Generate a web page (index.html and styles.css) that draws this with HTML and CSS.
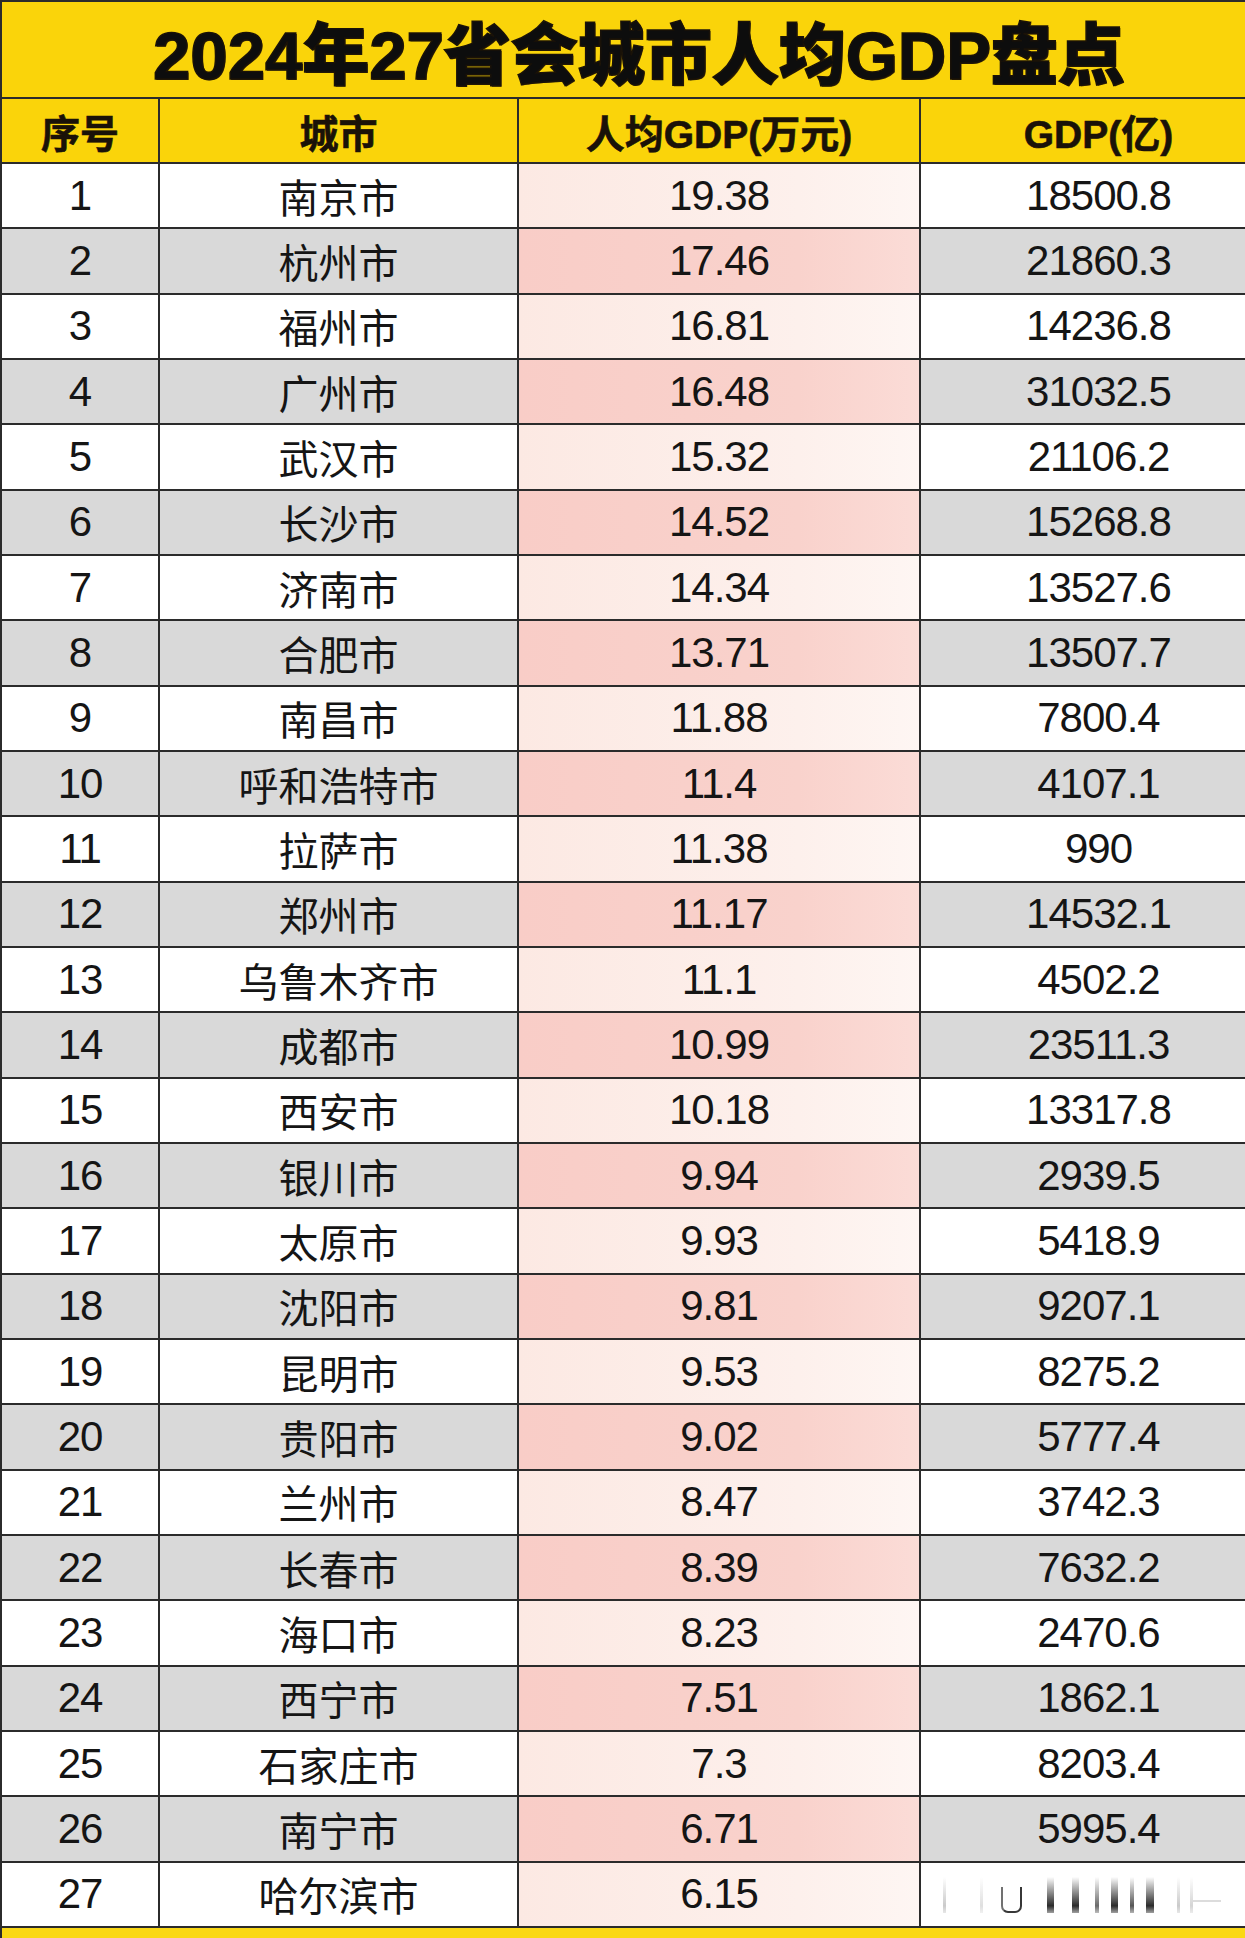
FILE: index.html
```html
<!DOCTYPE html>
<html lang="zh-CN">
<head>
<meta charset="utf-8">
<title>2024年27省会城市人均GDP盘点</title>
<link rel="stylesheet" href="styles.css">
</head>
<body>
<div class="sheet">
  <div class="title">2024年27省会城市人均GDP盘点</div>
  <div class="hd">序号</div>
  <div class="hd">城市</div>
  <div class="hd">人均GDP(万元)</div>
  <div class="hd last">GDP(亿)</div>

  <div class="c n">1</div><div class="c">南京市</div><div class="c p">19.38</div><div class="c n last">18500.8</div>
  <div class="c n g">2</div><div class="c g">杭州市</div><div class="c p g">17.46</div><div class="c n g last">21860.3</div>
  <div class="c n">3</div><div class="c">福州市</div><div class="c p">16.81</div><div class="c n last">14236.8</div>
  <div class="c n g">4</div><div class="c g">广州市</div><div class="c p g">16.48</div><div class="c n g last">31032.5</div>
  <div class="c n">5</div><div class="c">武汉市</div><div class="c p">15.32</div><div class="c n last">21106.2</div>
  <div class="c n g">6</div><div class="c g">长沙市</div><div class="c p g">14.52</div><div class="c n g last">15268.8</div>
  <div class="c n">7</div><div class="c">济南市</div><div class="c p">14.34</div><div class="c n last">13527.6</div>
  <div class="c n g">8</div><div class="c g">合肥市</div><div class="c p g">13.71</div><div class="c n g last">13507.7</div>
  <div class="c n">9</div><div class="c">南昌市</div><div class="c p">11.88</div><div class="c n last">7800.4</div>
  <div class="c n g">10</div><div class="c g">呼和浩特市</div><div class="c p g">11.4</div><div class="c n g last">4107.1</div>
  <div class="c n">11</div><div class="c">拉萨市</div><div class="c p">11.38</div><div class="c n last">990</div>
  <div class="c n g">12</div><div class="c g">郑州市</div><div class="c p g">11.17</div><div class="c n g last">14532.1</div>
  <div class="c n">13</div><div class="c">乌鲁木齐市</div><div class="c p">11.1</div><div class="c n last">4502.2</div>
  <div class="c n g">14</div><div class="c g">成都市</div><div class="c p g">10.99</div><div class="c n g last">23511.3</div>
  <div class="c n">15</div><div class="c">西安市</div><div class="c p">10.18</div><div class="c n last">13317.8</div>
  <div class="c n g">16</div><div class="c g">银川市</div><div class="c p g">9.94</div><div class="c n g last">2939.5</div>
  <div class="c n">17</div><div class="c">太原市</div><div class="c p">9.93</div><div class="c n last">5418.9</div>
  <div class="c n g">18</div><div class="c g">沈阳市</div><div class="c p g">9.81</div><div class="c n g last">9207.1</div>
  <div class="c n">19</div><div class="c">昆明市</div><div class="c p">9.53</div><div class="c n last">8275.2</div>
  <div class="c n g">20</div><div class="c g">贵阳市</div><div class="c p g">9.02</div><div class="c n g last">5777.4</div>
  <div class="c n">21</div><div class="c">兰州市</div><div class="c p">8.47</div><div class="c n last">3742.3</div>
  <div class="c n g">22</div><div class="c g">长春市</div><div class="c p g">8.39</div><div class="c n g last">7632.2</div>
  <div class="c n">23</div><div class="c">海口市</div><div class="c p">8.23</div><div class="c n last">2470.6</div>
  <div class="c n g">24</div><div class="c g">西宁市</div><div class="c p g">7.51</div><div class="c n g last">1862.1</div>
  <div class="c n">25</div><div class="c">石家庄市</div><div class="c p">7.3</div><div class="c n last">8203.4</div>
  <div class="c n g">26</div><div class="c g">南宁市</div><div class="c p g">6.71</div><div class="c n g last">5995.4</div>
  <div class="c n">27</div><div class="c">哈尔滨市</div><div class="c p">6.15</div>
  <div class="c n last wm-cell">
    <div class="wm" aria-hidden="true">
      <span class="b b1"></span><span class="b b2"></span><span class="u"></span>
      <span class="b b3"></span><span class="b b4"></span><span class="b b5"></span>
      <span class="b b6"></span><span class="b b7"></span><span class="b b8"></span>
      <span class="b b9"></span><span class="b b10"></span><span class="dash"></span>
    </div>
  </div>

  <div class="foot"></div>
</div>
</body>
</html>
```
FILE: styles.css
```css
html, body {
  margin: 0;
  padding: 0;
  overflow: hidden;
  background: #ffffff;
}

.sheet {
  width: 1276px;
  display: grid;
  grid-template-columns: 156px 357px 400px 355px;
  grid-template-rows: 95px 63px repeat(27, 63.33px) 12px;
  gap: 2px;
  padding: 2px 0 0 2px;
  background: #2b2b2b;
  font-family: "Liberation Sans", "Noto Sans CJK SC", sans-serif;
  color: #141414;
}

.title {
  grid-column: 1 / -1;
  background: #fad40a;
  display: flex;
  align-items: center;
  justify-content: center;
  font-size: 67px;
  font-weight: 900;
  color: #0d0d0d;
  -webkit-text-stroke: 1.5px #1a1208;
  text-shadow: 1px 1px 0 #3a2c05;
}

.hd {
  background: #fad40a;
  display: flex;
  align-items: center;
  justify-content: center;
  font-size: 39px;
  font-weight: 700;
  color: #1a1208;
  -webkit-text-stroke: 0.6px #1a1208;
}

.c {
  background: #ffffff;
  display: flex;
  align-items: center;
  justify-content: center;
  font-size: 40px;
  font-weight: 400;
  color: #151515;
}

.n {
  font-size: 42px;
  letter-spacing: -1px;
}

.g {
  background: #d9d9d9;
}

.p {
  font-size: 42px;
  letter-spacing: -1px;
  background: linear-gradient(to right, #fce9e3, #fdf0ec 70%, #fef6f3);
}

.p.g {
  background: linear-gradient(to right, #f9cdc7, #f9d2cc 70%, #fbdcd7);
}

.last {
  padding-left: 0;
}

.foot {
  grid-column: 1 / -1;
  background: #fad814;
}

.wm-cell {
  position: relative;
}

.wm {
  position: absolute;
  left: 20px;
  top: 12px;
  width: 290px;
  height: 38px;
}

.wm .b {
  position: absolute;
  bottom: 0;
  height: 36px;
  background: linear-gradient(to bottom, rgba(20, 20, 20, 0), rgba(20, 20, 20, 0.9) 80%, rgba(20, 20, 20, 0.4));
}

.wm .b1 { left: 2px; width: 3px; opacity: 0.25; }
.wm .b2 { left: 39px; width: 3px; opacity: 0.15; }
.wm .b3 { left: 106px; width: 7px; }
.wm .b4 { left: 131px; width: 7px; }
.wm .b5 { left: 154px; width: 4px; opacity: 0.7; }
.wm .b6 { left: 170px; width: 7px; }
.wm .b7 { left: 189px; width: 4px; opacity: 0.8; }
.wm .b8 { left: 205px; width: 8px; }
.wm .b9 { left: 236px; width: 3px; opacity: 0.25; }
.wm .b10 { left: 249px; width: 3px; opacity: 0.2; }

.wm .u {
  position: absolute;
  left: 60px;
  bottom: 0;
  width: 17px;
  height: 24px;
  border: 2px solid rgba(20, 20, 20, 0.85);
  border-top: none;
  border-radius: 0 0 7px 7px;
  border-left-color: rgba(20, 20, 20, 0.6);
}

.wm .dash {
  position: absolute;
  left: 252px;
  top: 25px;
  width: 28px;
  height: 2px;
  background: rgba(20, 20, 20, 0.15);
}
```
